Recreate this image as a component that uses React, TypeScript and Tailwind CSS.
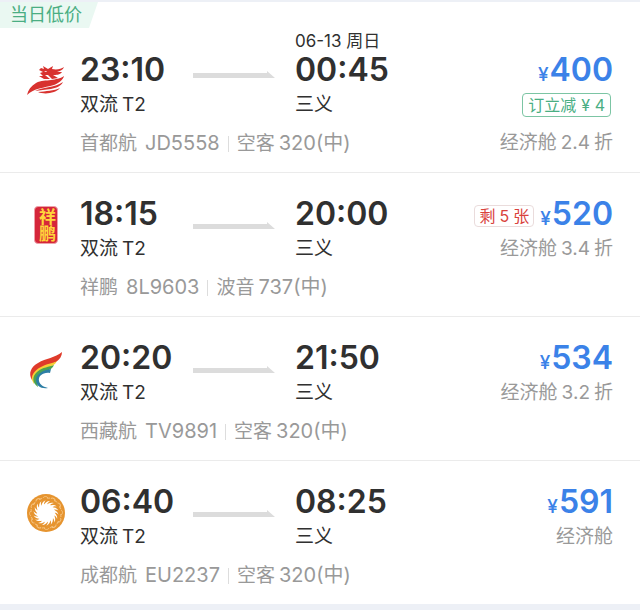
import React from "react";

interface Flight {
  airline: string;
  number: string;
  plane: string;
  size: string;
  departTime: string;
  arriveTime: string;
  arriveDate?: string;
  price: number;
  discount?: string;
  seatsLeft?: number;
  rebate?: number;
  logo: React.ReactNode;
}

const CapitalLogo = () => (
  <svg viewBox="0 0 40 40" className="h-10 w-10" aria-hidden="true">
    <g fill="#d8322f">
      <path d="M1 34 C2 29 5 25 10 22 C15 19 20 20 25 19 C30 18 34 18 38 15 C37 19 33 22 28 24 C18 27 8 27 1 34Z" />
      <path d="M9 30 C16 26 28 27 37 21 C35 25 30 27 25 28 C19 29 14 29 9 30Z" />
      <path d="M12 31 C20 30 28 30 34 27 C30 32 19 34 12 31Z" />
      <path d="M13 9 L15 7 L18 8 L17 5 L22 8 L27 5 L26 8 C31 9 35 8 38 6 C37 9 34 10 31 11 L36 11 C34 14 30 14 27 14 L32 17 L26 18 L22 14 L19 14 L24 18 L18 18 L13 15 L17 15 L14 12 L17 11Z" />
    </g>
    <path d="M18 10 L21 10 L20 11Z" fill="#fff" />
  </svg>
);

const LuckyLogo = () => (
  <div className="flex h-10 w-10 items-center justify-center">
    <div className="flex h-[38px] w-6 items-center justify-center rounded border border-[#eda0a8] bg-[#d5263a] text-[17px] leading-6 font-bold text-[#ffd53a] [writing-mode:vertical-rl]">
      祥鹏
    </div>
  </div>
);

const TibetLogo = () => (
  <svg viewBox="0 0 40 40" className="h-10 w-10" aria-hidden="true">
    <path d="M36 3 C36 7 34 10 30 13 C22 17 10 20 6 31 C2 24 5 18 12 14 C20 9 29 9 36 3Z" fill="#df3b2b" />
    <path d="M31 12 C29 16 25 18 20 20 C12 24 8 29 8 35 L6 31 C5 25 10 20 17 17 C23 14 28 14 31 12Z" fill="#f6cf35" />
    <path d="M28 16 C27 19 24 21 20 22 C13 25 10 30 12 38 C6 34 6 27 11 23 C17 18 23 18 28 16Z" fill="#4ba352" />
    <path d="M25 20 L24 24 C17 23 12 27 13 32 C14 36 18 38 22 39 C15 40 10 37 10 31 C10 25 17 21 25 20Z" fill="#2d7ea5" />
  </svg>
);

const rays = Array.from({ length: 18 }, (_, i) => i * 20);
const waves = Array.from({ length: 12 }, (_, i) => i * 30);

const ChengduLogo = () => (
  <svg viewBox="0 0 40 40" className="h-10 w-10" aria-hidden="true">
    <circle cx="20" cy="20" r="19" fill="#e6942f" />
    {waves.map((angle) => (
      <path
        key={angle}
        d="M17 5 C18 3 21 3 22 5 C21 4 20 6 24 5"
        fill="none"
        stroke="#f5c380"
        strokeWidth="1"
        transform={`rotate(${angle} 20 20)`}
      />
    ))}
    <circle cx="20" cy="20" r="9" fill="#fff" />
    {rays.map((angle) => (
      <path
        key={angle}
        d="M18 12 C19 10 21 8 24 8 C22 9 21 11 21 12Z"
        fill="#fff"
        transform={`rotate(${angle} 20 20)`}
      />
    ))}
  </svg>
);

const flights: Flight[] = [
  {
    airline: "首都航",
    number: "JD5558",
    plane: "空客",
    size: "320(中)",
    departTime: "23:10",
    arriveTime: "00:45",
    arriveDate: "06-13 周日",
    price: 400,
    discount: "2.4",
    rebate: 4,
    logo: <CapitalLogo />,
  },
  {
    airline: "祥鹏",
    number: "8L9603",
    plane: "波音",
    size: "737(中)",
    departTime: "18:15",
    arriveTime: "20:00",
    price: 520,
    discount: "3.4",
    seatsLeft: 5,
    logo: <LuckyLogo />,
  },
  {
    airline: "西藏航",
    number: "TV9891",
    plane: "空客",
    size: "320(中)",
    departTime: "20:20",
    arriveTime: "21:50",
    price: 534,
    discount: "3.2",
    logo: <TibetLogo />,
  },
  {
    airline: "成都航",
    number: "EU2237",
    plane: "空客",
    size: "320(中)",
    departTime: "06:40",
    arriveTime: "08:25",
    price: 591,
    logo: <ChengduLogo />,
  },
];

const Arrow = () => (
  <svg viewBox="0 0 82 8" className="h-2 w-[82px]" aria-hidden="true">
    <path d="M0 2 H74 V0 L82 7 H0Z" fill="#dcdcdc" />
  </svg>
);

const FlightRow: React.FC<{ flight: Flight }> = ({ flight }) => (
  <li className="flex border-b border-[#ebebeb] pr-[27px] pb-[14px] last:border-0">
    <div className="w-20 shrink-0 pt-8 pl-[26px]">{flight.logo}</div>

    <div className="grow">
      <div className="flex">
        <div className="w-[113px] shrink-0 pt-[23px]">
          <div className="text-[32px] leading-9 font-semibold">{flight.departTime}</div>
          <div className="flex gap-1 text-[19px] leading-[34px]">
            <span>双流</span>
            <span>T2</span>
          </div>
        </div>
        <div className={flight.arriveDate ? "pt-[42px]" : "pt-[49px]"}>
          <Arrow />
        </div>
        <div className="pl-5">
          <div className="h-[23px] pt-1 text-[17px] leading-4">{flight.arriveDate}</div>
          <div className="text-[32px] leading-9 font-semibold">{flight.arriveTime}</div>
          <div className="text-[19px] leading-[34px]">三义</div>
        </div>
      </div>
      <div className="flex items-baseline pt-[7px] text-[19px] leading-7 text-[#999]">
        <span>{flight.airline}</span>
        <span className="ml-2 text-[20px]">{flight.number}</span>
        <span className="mx-2 h-4 w-px self-center bg-[#ddd]" />
        <span>{flight.plane}</span>
        <span className="ml-1 text-[20px]">{flight.size}</span>
      </div>
    </div>

    <div className="flex shrink-0 flex-col items-end pt-[23px]">
      <div className="flex items-center gap-[6px]">
        {flight.seatsLeft && (
          <span className="mt-1 flex gap-1 rounded border border-[#eadcdc] px-1 text-base leading-5 text-[#d9423c]">
            <span>剩</span>
            <span>{flight.seatsLeft}</span>
            <span>张</span>
          </span>
        )}
        <div className="text-[32px] leading-9 font-semibold text-[#3b82e8]">
          <span className="mr-px text-[19px] leading-none font-medium">¥</span>
          {flight.price}
        </div>
      </div>
      {flight.rebate && (
        <div className="mt-[5px] mr-[2px] mb-[14px] flex gap-[5px] rounded border border-[#7cc5a4] px-[5px] text-base leading-[22px] text-[#4aae83]">
          <span>订立减</span>
          <span>¥ {flight.rebate}</span>
        </div>
      )}
      <div
        className={`flex gap-1 text-[19px] text-[#999] ${flight.rebate ? "leading-6" : "leading-[34px]"}`}
      >
        <span>经济舱</span>
        {flight.discount && (
          <>
            <span>{flight.discount}</span>
            <span>折</span>
          </>
        )}
      </div>
    </div>
  </li>
);

const App: React.FC = () => {
  return (
    <main className="border-t-2 border-b-6 border-[#edf0f6] bg-white font-[Inter,'Noto_Sans_CJK_SC',sans-serif] text-[#303030]">
      <div className="flex pb-px">
        <span className="bg-[#eaf8f2] pr-4 pl-[10px] text-lg leading-[26px] text-[#4aae83] [clip-path:polygon(0_0,100%_0,calc(100%-9px)_100%,0_100%)]">
          当日低价
        </span>
      </div>
      <ul>
        {flights.map((flight) => (
          <FlightRow key={flight.number} flight={flight} />
        ))}
      </ul>
    </main>
  );
};

export default App;
